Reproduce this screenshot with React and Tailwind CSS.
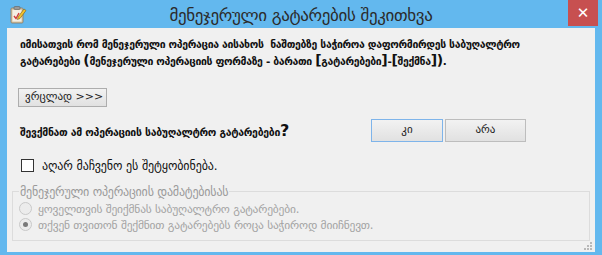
import React from 'react';

const font = { fontFamily: '"DejaVu Sans", "Noto Sans", sans-serif' };

const AppIcon = () => (
  <svg width="18" height="20" viewBox="0 0 18 20">
    <rect x="2" y="4" width="12" height="15" rx="1" fill="#d8c7a6" stroke="#8a7a60" strokeWidth="0.8" />
    <rect x="3.5" y="6" width="9" height="11.5" fill="#f4efe4" />
    <rect x="5" y="2.5" width="6" height="3" rx="1" fill="#9a9a9a" stroke="#606060" strokeWidth="0.6" />
    <path d="M5 12 L7 14.5 L10 9" fill="none" stroke="#d23a3a" strokeWidth="1.4" />
    <path d="M9 13 L15 5 L17 6.5 L11 14.5 L8.5 15.5 Z" fill="#f2c230" stroke="#7a5a10" strokeWidth="0.6" />
  </svg>
);

const WinButton = ({ children, className = '' }) => (
  <button
    className={`flex items-center justify-center bg-gradient-to-b from-[#f2f2f2] to-[#e1e1e1] text-[11px] text-[#222] ${className}`}
    style={font}
  >
    {children}
  </button>
);

const Radio = ({ checked }) => (
  <span className="flex h-[13px] w-[13px] items-center justify-center rounded-full border border-[#c9c9c9] bg-[#ececec]">
    {checked && <span className="h-[5px] w-[5px] rounded-full bg-[#7a7a7a]" />}
  </span>
);

export default function App() {
  return (
    <div className="flex h-[255px] w-[602px] flex-col bg-[#63b8ee]" style={font}>
      <div className="relative flex h-[28px] items-center">
        <div className="ml-[9px]">
          <AppIcon />
        </div>
        <div className="absolute left-0 right-0 top-[3px] text-center text-[17px] leading-[24px] tracking-[-0.35px] text-[#2b2b2b]">
          მენეჯერული გატარების შეკითხვა
        </div>
        <div className="absolute right-[4px] top-0 flex h-[26px] w-[30px] items-center justify-center bg-[#c75050] text-[15px] font-bold text-white">
          ✕
        </div>
      </div>
      <div className="mx-[7px] flex h-[224px] flex-col bg-[#f0f0f0] text-[#111]">
        <div className="ml-[13px] mt-[8px] text-[10.5px] font-bold leading-[16px] tracking-[-0.35px]">
          <div>იმისათვის რომ მენეჯერული ოპერაცია აისახოს&nbsp; ნაშთებზე საჭიროა დაფორმირდეს საბუღალტრო</div>
          <div>
            გატარებები <span className="text-[14px]">(</span>მენეჯერული ოპერაციის ფორმაზე - ბარათი{' '}
            <span className="text-[14px]">[</span>გატარებები<span className="text-[14px]">]</span>-
            <span className="text-[14px]">[</span>შექმნა<span className="text-[14px]">])</span>.
          </div>
        </div>
        <WinButton className="ml-[11px] mt-[19px] h-[19px] w-[89px] justify-start border border-[#adadad] pl-[6px]">
          ვრცლად &gt;&gt;&gt;
        </WinButton>
        <div className="mt-[12px] flex items-center">
          <div className="ml-[13px] w-[351px] text-[10.5px] font-bold tracking-[-0.3px]">
            შევქმნათ ამ ოპერაციის საბუღალტრო გატარებები<span className="text-[16px]">?</span>
          </div>
          <WinButton className="h-[23px] w-[72px] border border-[#7eb4ea]">კი</WinButton>
          <WinButton className="ml-[2px] h-[23px] w-[81px] border border-[#bdbdbd]">არა</WinButton>
        </div>
        <div className="ml-[14px] mt-[14px] flex items-center gap-[8px]">
          <span className="h-[13px] w-[13px] border border-[#333] bg-white" />
          <span className="text-[12px] tracking-[-0.1px]">აღარ მაჩვენო ეს შეტყობინება.</span>
        </div>
        <fieldset className="mx-[5px] mt-[8px] h-[63px] border border-[#dcdcdc] px-[6px]">
          <legend className="px-[1px] text-[12px] tracking-[-0.2px] text-[#9a9a9a]">
            მენეჯერული ოპერაციის დამატებისას
          </legend>
          <div className="flex flex-col text-[11.5px] leading-[16px] tracking-[-0.2px] text-[#a3a3a3]">
            <div className="flex items-center gap-[6px]">
              <Radio />
              <span>ყოველთვის შეიქმნას საბუღალტრო გატარებები.</span>
            </div>
            <div className="flex items-center gap-[6px]">
              <Radio checked />
              <span>თქვენ თვითონ შექმნით გატარებებს როცა საჭიროდ მიიჩნევთ.</span>
            </div>
          </div>
        </fieldset>
        <div className="mr-[2px] mt-auto mb-[1px] self-end">
          <svg width="10" height="10" viewBox="0 0 10 10">
            <rect x="7" y="1" width="2" height="2" fill="#b8b8b8" />
            <rect x="4" y="4" width="2" height="2" fill="#b8b8b8" />
            <rect x="7" y="4" width="2" height="2" fill="#b8b8b8" />
            <rect x="1" y="7" width="2" height="2" fill="#b8b8b8" />
            <rect x="4" y="7" width="2" height="2" fill="#b8b8b8" />
            <rect x="7" y="7" width="2" height="2" fill="#b8b8b8" />
          </svg>
        </div>
      </div>
    </div>
  );
}
